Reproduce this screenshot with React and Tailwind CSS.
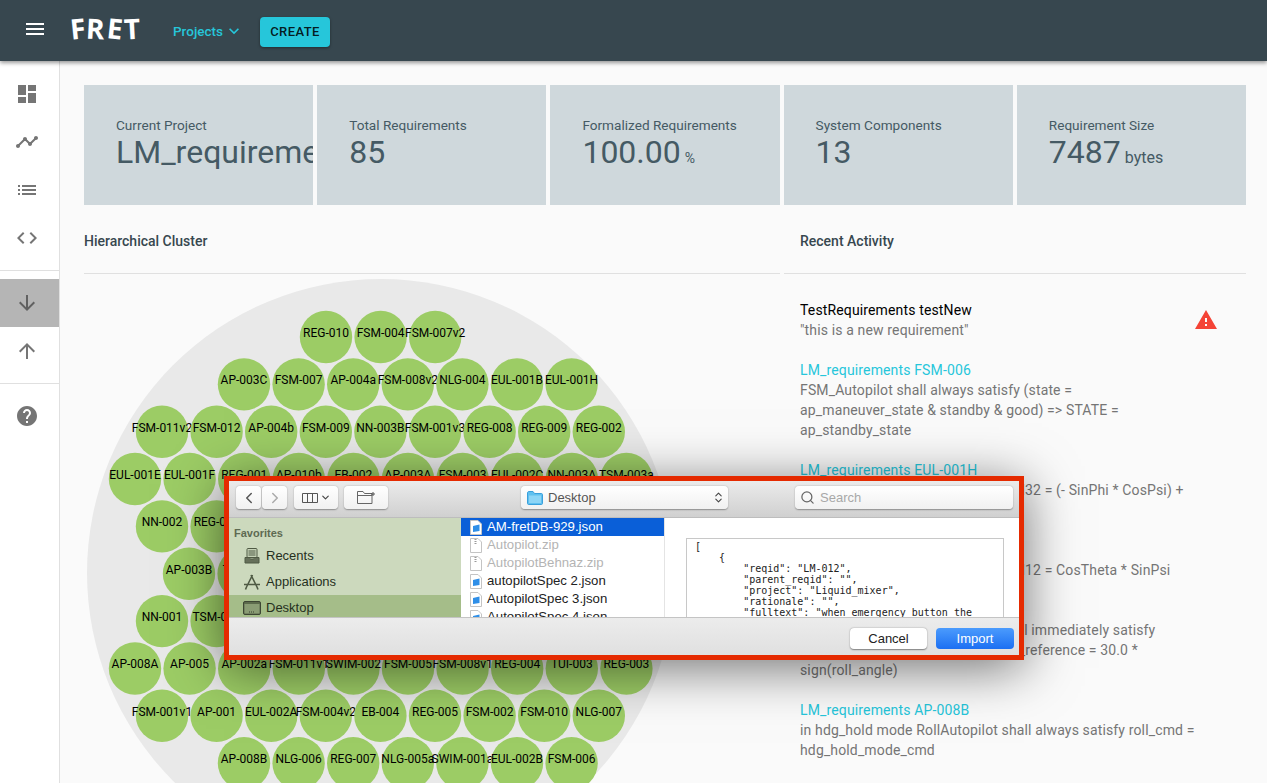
import React from 'react';
import {
  MdMenu,
  MdKeyboardArrowDown,
  MdDashboard,
  MdTimeline,
  MdList,
  MdCode,
  MdArrowDownward,
  MdArrowUpward,
  MdHelp,
  MdWarning,
} from 'react-icons/md';
import { ChevronLeft, ChevronRight, ChevronDown, ChevronsUpDown, Search } from 'lucide-react';

const ROW_TOP = 337;
const ROW_STEP = 47.35;

// cluster rows, x of the first bubble then labels, 54.6px apart
const clusterRows = [
  [326, ['REG-010', 'FSM-004', 'FSM-007v2']],
  [244, ['AP-003C', 'FSM-007', 'AP-004a', 'FSM-008v2', 'NLG-004', 'EUL-001B', 'EUL-001H']],
  [162, ['FSM-011v2', 'FSM-012', 'AP-004b', 'FSM-009', 'NN-003B', 'FSM-001v3', 'REG-008', 'REG-009', 'REG-002']],
  [135, ['EUL-001E', 'EUL-001F', 'REG-001', 'AP-010b', 'EB-002', 'AP-003A', 'FSM-003', 'EUL-002C', 'NN-003A', 'TSM-003a']],
  [162, ['NN-002', 'REG-006', 'TUI-001', 'FSM-011', 'NLG-001', 'AP-002', 'REG-011', 'AP-007', 'NLG-002']],
  [189, ['AP-003B', 'TUI-002', 'EB-001', 'NN-004', 'SWIM-001', 'AP-006', 'EUL-001C', 'FSM-013']],
  [162, ['NN-001', 'TSM-001', 'AP-009', 'EUL-001A', 'NLG-003', 'EB-003', 'AP-010a', 'FSM-014', 'TSM-002']],
  [135, ['AP-008A', 'AP-005', 'AP-002a', 'FSM-011v1', 'SWIM-002', 'FSM-005', 'FSM-008v1', 'REG-004', 'TUI-003', 'REG-003']],
  [162, ['FSM-001v1', 'AP-001', 'EUL-002A', 'FSM-004v2', 'EB-004', 'REG-005', 'FSM-002', 'FSM-010', 'NLG-007']],
  [244, ['AP-008B', 'NLG-006', 'REG-007', 'NLG-005a', 'SWIM-001a', 'EUL-002B', 'FSM-006']],
];

const stats = [
  { label: 'Current Project', value: 'LM_requirements' },
  { label: 'Total Requirements', value: '85' },
  { label: 'Formalized Requirements', value: '100.00', unit: '%', unitClass: 'text-[14px]' },
  { label: 'System Components', value: '13' },
  { label: 'Requirement Size', value: '7487', unit: 'bytes', unitClass: 'text-[16px]' },
];

const activity = [
  {
    title: 'LM_requirements FSM-006',
    lines: ['FSM_Autopilot shall always satisfy (state =', 'ap_maneuver_state & standby & good) => STATE =', 'ap_standby_state'],
  },
  {
    title: 'LM_requirements EUL-001H',
    lines: ['Euler_Angles shall always satisfy M32 = (- SinPhi * CosPsi) +', '(CosPhi * SinTheta * SinPsi)'],
  },
  {
    title: 'LM_requirements EUL-001F',
    lines: ['Euler_Angles shall always satisfy M12 = CosTheta * SinPsi'],
  },
  {
    title: 'LM_requirements AP-008A',
    lines: ['in roll_hold mode RollAutopilot shall immediately satisfy', 'abs(roll_angle) >= 30.00 => the roll_reference = 30.0 *', 'sign(roll_angle)'],
  },
  {
    title: 'LM_requirements AP-008B',
    lines: ['in hdg_hold mode RollAutopilot shall always satisfy roll_cmd =', 'hdg_hold_mode_cmd'],
  },
];

const previewLines = [
  '[',
  '    {',
  '        "reqid": "LM-012",',
  '        "parent_reqid": "",',
  '        "project": "Liquid_mixer",',
  '        "rationale": "",',
  '        "fulltext": "when emergency_button the',
];

const files = [
  { name: 'AM-fretDB-929.json', selected: true },
  { name: 'Autopilot.zip', zip: true },
  { name: 'AutopilotBehnaz.zip', zip: true },
  { name: 'autopilotSpec 2.json' },
  { name: 'AutopilotSpec 3.json' },
  { name: 'AutopilotSpec 4.json' },
];

const NavItem = ({ icon: Icon, active }) => (
  <div className={`h-12 flex items-center pl-[15px] ${active ? 'bg-[#b5b5b5]' : ''}`}>
    <Icon className={active ? 'text-[#616161]' : 'text-[#757575]'} size={24} />
  </div>
);

const Sidebar = () => (
  <div className="w-[60px] shrink-0 bg-white border-r border-[#e0e0e0]">
    <div className="pt-[9px] pb-2">
      <NavItem icon={MdDashboard} />
      <NavItem icon={MdTimeline} />
      <NavItem icon={MdList} />
      <NavItem icon={MdCode} />
    </div>
    <div className="h-px bg-[#e0e0e0]" />
    <div className="py-2">
      <NavItem icon={MdArrowDownward} active />
      <NavItem icon={MdArrowUpward} />
    </div>
    <div className="h-px bg-[#e0e0e0]" />
    <div className="py-2">
      <NavItem icon={MdHelp} />
    </div>
  </div>
);

const Header = () => (
  <div className="relative z-10 h-[61px] shrink-0 flex items-center bg-[#37474f] shadow-[0_2px_4px_rgba(0,0,0,0.4)]">
    <MdMenu className="ml-[23px] mb-[4px] text-white" size={24} />
    <div className="ml-[23px] w-[70px] mb-[6px] flex items-center text-white font-bold text-[28px] leading-none [font-family:'Open_Sans',sans-serif]">
      <span className="inline-block -rotate-6">F</span>
      <span className="inline-block rotate-3 ml-[1px]">R</span>
      <span className="inline-block rotate-6 ml-[2px]">E</span>
      <span className="inline-block -rotate-3 ml-[1px]">T</span>
    </div>
    <div className="ml-[33px] mt-[1px] flex items-center text-[#26c6da] text-[13.5px] font-medium">
      Projects
      <MdKeyboardArrowDown className="ml-[1px]" size={20} />
    </div>
    <div className="ml-[16px] mt-[3px] w-[70px] h-[30px] flex items-center justify-center bg-[#26c6da] rounded text-[13px] font-medium text-[rgba(0,0,0,0.87)] shadow-[0_1px_3px_rgba(0,0,0,0.4)] tracking-[0.4px]">
      CREATE
    </div>
  </div>
);

const StatCard = ({ label, value, unit, unitClass }) => (
  <div className="h-[120px] bg-[#cfd8dc] overflow-hidden pl-[32px] pt-[32px] whitespace-nowrap">
    <div className="text-[13.6px] leading-[17px] text-[#455a64]">{label}</div>
    <div className="text-[32px] leading-[36px] text-[#455a64]">
      {value}
      {unit && <span className={`ml-[4px] ${unitClass}`}>{unit}</span>}
    </div>
  </div>
);

const SectionTitle = ({ children, className }) => (
  <div className={`h-[69px] pt-[4px] flex items-center border-b border-[#e0e0e0] text-[14px] font-medium text-[#37474f] ${className}`}>
    {children}
  </div>
);

const Cluster = () => (
  <svg className="block" width="696" height="509" viewBox="84 274 696 509">
    <circle cx="381" cy="573" r="294" fill="#e9e9e9" />
    {clusterRows.map(([startX, labels], r) =>
      labels.map((label, i) => (
        <g key={label}>
          <circle cx={startX + i * 54.6} cy={ROW_TOP + r * ROW_STEP} r="26.2" fill="#9ccc65" />
          <text x={startX + i * 54.6} y={ROW_TOP + r * ROW_STEP} textAnchor="middle" fontSize="12" fill="#000">
            {label}
          </text>
        </g>
      ))
    )}
  </svg>
);

const Activity = () => (
  <div className="pt-[26px] pl-4 pr-4 text-[14px] leading-[20px] tracking-[0.14px]">
    <div className="relative mb-[20px]">
      <div className="text-black">TestRequirements testNew</div>
      <div className="text-[#757575]">"this is a new requirement"</div>
      <MdWarning className="absolute left-[394px] top-[8px] text-[#f44336]" size={24} />
    </div>
    {activity.map((item) => (
      <div key={item.title} className="mb-[20px]">
        <div className="text-[#26c6da]">{item.title}</div>
        {item.lines.map((line, i) => (
          <div key={i} className="h-5 text-[#757575] whitespace-nowrap">{line}</div>
        ))}
      </div>
    ))}
  </div>
);

const ToolButton = ({ className, children }) => (
  <div className={`h-[23px] flex items-center justify-center bg-gradient-to-b from-white to-[#f1f1f1] rounded-[4px] shadow-[0_0.5px_1.5px_rgba(0,0,0,0.35)] ${className}`}>
    {children}
  </div>
);

const FileIcon = ({ zip }) => (
  <svg width="12" height="15" viewBox="0 0 12 15" className="shrink-0">
    <path d="M0.5 0.5H8L11.5 4V14.5H0.5Z" fill="#fff" stroke="#c4c4c4" />
    {zip ? (
      <path d="M5.5 1V7" stroke="#9a9a9a" strokeWidth="2" strokeDasharray="1 1" />
    ) : (
      <path d="M3 6L9.5 4.5V11L3 12Z" fill="#2f8fe8" />
    )}
  </svg>
);

const RecentsIcon = () => (
  <svg width="18" height="18" viewBox="0 0 18 18" fill="none" stroke="#4f5a44" strokeWidth="1">
    <rect x="4" y="1.5" width="10" height="9" rx="1" fill="#c5d2b6" />
    <path d="M5.5 4H12.5M5.5 6H12.5M5.5 8H12.5" />
    <path d="M2 10.5H6C6 12.5 12 12.5 12 10.5H16V16H2Z" fill="#66705a" />
  </svg>
);

const AppsIcon = () => (
  <svg width="18" height="18" viewBox="0 0 18 18" fill="none" stroke="#4f5a44" strokeWidth="1.6">
    <path d="M9.5 2L3.5 14M8 2L14 14M1 11.5H17M3.5 14L2.5 16.5M14 14L15 16.5" />
  </svg>
);

const DesktopIcon = () => (
  <svg width="18" height="14" viewBox="0 0 18 14" fill="none">
    <rect x="0.5" y="0.5" width="17" height="13" rx="1.5" fill="#5c6a4c" stroke="#3d4633" />
    <rect x="1.5" y="3" width="15" height="9.5" fill="#8a9c74" />
    <path d="M6 11H12" stroke="#38402e" strokeDasharray="1 1" />
  </svg>
);

const FolderIcon = () => (
  <svg width="16" height="14" viewBox="0 0 16 14">
    <path d="M0.5 2C0.5 1 1 0.5 2 0.5H6L7.5 2.5H14.5C15 2.5 15.5 3 15.5 3.5V12.5C15.5 13 15 13.5 14.5 13.5H1.5C1 13.5 0.5 13 0.5 12.5Z" fill="#5fc0ef" stroke="#3aa0dc" />
    <rect x="2" y="4.5" width="12" height="7.5" fill="#8dd5f6" />
  </svg>
);

const NewFolderIcon = () => (
  <svg width="19" height="13" viewBox="0 0 19 13" fill="none" stroke="#666">
    <path d="M0.5 12.5V0.5H6L7.5 2.5H15V12.5Z" />
    <path d="M0.5 4.5H15" />
    <path d="M16 1V5M14 3H18" stroke="#555" />
  </svg>
);

const ColumnsIcon = () => (
  <svg width="16" height="10" viewBox="0 0 16 10" fill="none" stroke="#555">
    <path d="M0.5 0.5H15.5V9.5H0.5ZM5.5 0.5V9.5M10.5 0.5V9.5" />
  </svg>
);

const SideRow = ({ icon, label, active }) => (
  <div className={`h-[26px] pl-[14px] flex items-center gap-[5px] text-[13px] text-[#26301d] ${active ? 'bg-[#a5bd89]' : ''}`}>
    <span className="w-[18px] flex justify-center">{icon}</span>
    {label}
  </div>
);

const ImportDialog = () => (
  <div className="absolute left-[224px] top-[476px] z-20 w-[800px] h-[184px] flex flex-col border-[5px] border-[#e52a00] shadow-[0_8px_50px_rgba(0,0,0,0.55)] overflow-hidden [font-family:'Liberation_Sans',sans-serif]">
    <div className="h-[37px] shrink-0 flex items-center pl-[7px] pb-[3px] bg-gradient-to-b from-[#ebebeb] to-[#d0d0d0] border-b border-[#bdbdbd]">
      <ToolButton className="w-[25px]">
        <ChevronLeft size={18} className="text-[#555]" />
      </ToolButton>
      <ToolButton className="ml-px w-[25px]">
        <ChevronRight size={18} className="text-[#aaa]" />
      </ToolButton>
      <ToolButton className="ml-[7px] w-[44px] gap-[2px]">
        <ColumnsIcon />
        <ChevronDown size={11} className="text-[#444]" strokeWidth={2.5} />
      </ToolButton>
      <ToolButton className="ml-[6px] w-[44px]">
        <NewFolderIcon />
      </ToolButton>
      <ToolButton className="ml-[133px] w-[207px] !justify-start pl-[6px] gap-[5px] text-[13px] text-[#555]">
        <FolderIcon />
        Desktop
        <ChevronsUpDown size={13} className="ml-auto mr-[3px] text-[#444]" />
      </ToolButton>
      <ToolButton className="ml-[67px] w-[218px] !justify-start pl-[5px] gap-[5px] text-[13px] text-[#a8a8a8]">
        <Search size={15} className="text-[#666]" />
        Search
      </ToolButton>
    </div>

    <div className="h-[99px] shrink-0 flex overflow-hidden">
      <div className="w-[232px] shrink-0 bg-[#ccd9bd] pt-[8px]">
        <div className="pl-[5px] h-[17px] pb-[3px] flex items-center text-[11px] font-bold text-[#5e6a52]">Favorites</div>
        <SideRow icon={<RecentsIcon />} label="Recents" />
        <SideRow icon={<AppsIcon />} label="Applications" />
        <SideRow icon={<DesktopIcon />} label="Desktop" active />
      </div>
      <div className="w-[204px] shrink-0 bg-white border-r border-[#e4e4e4] overflow-hidden">
        {files.map((f) => (
          <div
            key={f.name}
            className={`h-[18px] pl-[9px] flex items-center gap-[5px] text-[13.2px] whitespace-nowrap ${f.selected ? 'bg-[#0a5fd8] text-white' : f.zip ? 'text-[#b4b4b4]' : 'text-[#222]'}`}
          >
            <FileIcon zip={f.zip} />
            {f.name}
          </div>
        ))}
      </div>
      <div className="flex-1 bg-white pl-[21px] pt-[20px] pr-[15px]">
        <div className="h-[90px] border border-[#c8c8c8] pl-[8px] pt-[2px] overflow-hidden">
          {previewLines.map((line) => (
            <pre key={line} className="h-[11px] text-[10px] leading-[11px] text-[#222] [font-family:'DejaVu_Sans_Mono',monospace]">{line}</pre>
          ))}
        </div>
      </div>
    </div>

    <div className="flex-1 flex items-center justify-end pr-[5px] bg-gradient-to-b from-[#ececec] to-[#e0e0e0] border-t border-[#c4c4c4] pt-[4px]">
      <div className="w-[77px] h-[21px] flex items-center justify-center bg-white rounded-[4px] text-[13px] text-[#222] shadow-[0_0.5px_1.5px_rgba(0,0,0,0.45)]">Cancel</div>
      <div className="ml-[9px] w-[78px] h-[21px] flex items-center justify-center bg-gradient-to-b from-[#4b9bfd] to-[#1b6ff2] rounded-[4px] text-[13px] text-white">Import</div>
    </div>
  </div>
);

const App = () => (
  <div className="relative w-full h-[783px] overflow-hidden flex flex-col bg-[#fafafa] [font-family:Roboto,sans-serif]">
    <Header />
    <div className="flex-1 flex min-h-0">
      <Sidebar />
      <div className="flex-1 pl-[24px] pr-[21px] pt-[24px] min-w-0">
        <div className="grid grid-cols-5 gap-[4px]">
          {stats.map((s) => (
            <StatCard key={s.label} {...s} />
          ))}
        </div>
        <div className="flex gap-[4px]">
          <div className="w-[696px] shrink-0">
            <SectionTitle>Hierarchical Cluster</SectionTitle>
            <Cluster />
          </div>
          <div className="flex-1 min-w-0">
            <SectionTitle className="pl-4">Recent Activity</SectionTitle>
            <Activity />
          </div>
        </div>
      </div>
    </div>
    <ImportDialog />
  </div>
);

export default App;
